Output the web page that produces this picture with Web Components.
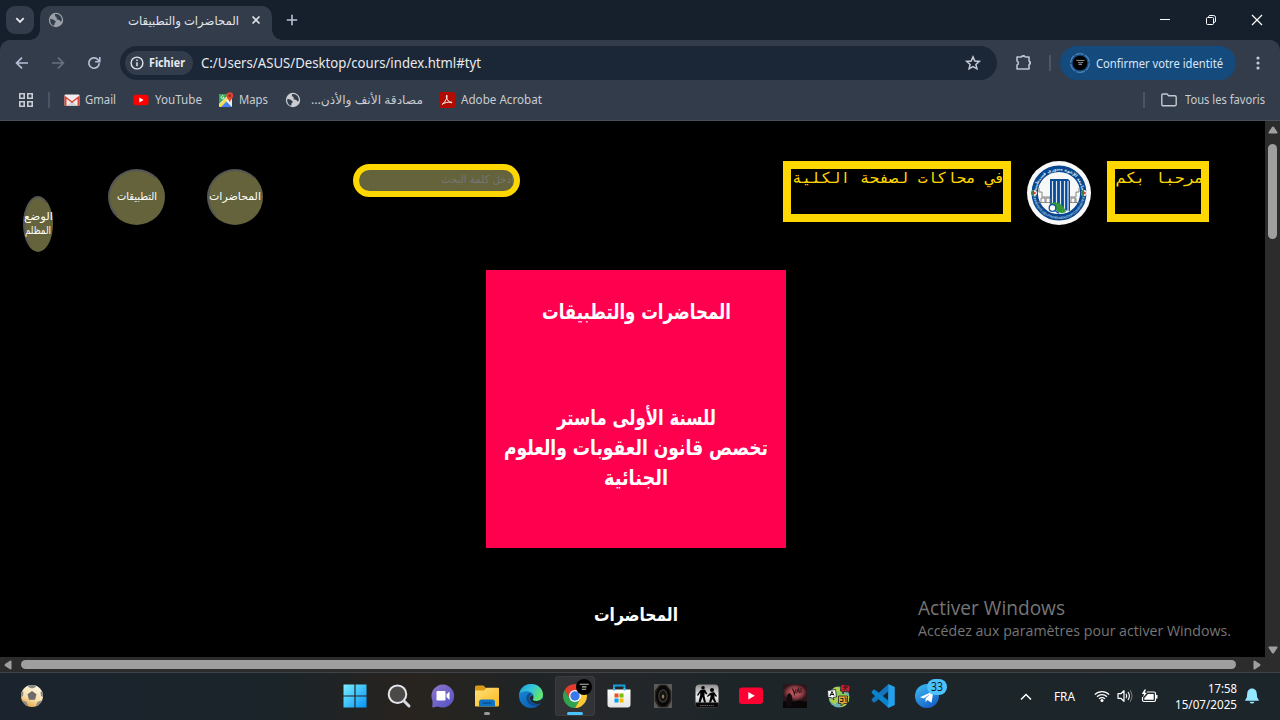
<!DOCTYPE html>
<html lang="fr">
<head>
<meta charset="utf-8">
<title>المحاضرات والتطبيقات</title>
<style>
html,body{margin:0;height:100%;overflow:hidden;background:#000}
body{font-family:"Noto Sans","Open Sans","DejaVu Sans",sans-serif}
</style>
</head>
<body>
<desk-screen></desk-screen>
<script>
const define = (name, html, after) => customElements.define(name, class extends HTMLElement {
  connectedCallback() {
    if (this.shadowRoot) return;
    const t = document.createElement('template');
    t.innerHTML = typeof html === 'function' ? html(this) : html;
    this.attachShadow({mode: 'open'}).append(t.content.cloneNode(true));
    if (after) after(this);
  }
});

/* One line of text set to a given width: <fit-text w="120">…</fit-text> */
define('fit-text', el => `<style>
:host{display:flex;flex:none;white-space:nowrap;line-height:1.36;width:${el.getAttribute('w')}px;direction:ltr}
span{display:block;flex:none;width:max-content;transform-origin:0 50%;direction:${el.hasAttribute('rtl') ? 'rtl' : 'ltr'};unicode-bidi:isolate}
</style><span><slot></slot></span>`, el => {
  const s = el.shadowRoot.querySelector('span');
  const n = s.getBoundingClientRect().width;
  if (n) s.style.transform = `scaleX(${el.getAttribute('w') / n})`;
});

const globe = c => `<circle cx="8" cy="8" r="7.2" fill="${c}"/><path d="M2.2 7.2C4.5 6.8 5.5 8 6.5 8.600C8 9.400 8.200 10 7 10.800C6.300 11.500 6.500 13 6 13.700C3.500 13 1.800 10.600 2.200 7.200Z" fill="#323c4b"/><path d="M6.800 2C7.500 2.600 6.500 3.800 7.500 4.600C8.800 5.300 9.200 6.300 8.500 7.200C9.800 8.200 11.300 7.200 12 8.800C12.400 10 13 9.500 13.700 8.800C14.300 5 11.500 1.800 8 1.900Z" fill="#323c4b"/>`;
const icons = {
  chevron: [10,10,`<path d="M1.300 3.200L5 6.900L8.700 3.200" fill="none" stroke="#e3e6ec" stroke-width="1.900"/>`],
  globeTab: [16,16,globe('#9ba0a8')],
  globe: [16,16,globe('#c9ccd1')],
  close: [10,10,`<path d="M1.500 1.500L8.500 8.500M8.500 1.500L1.500 8.500" stroke="#dfe2e8" stroke-width="1.700"/>`],
  plus: [12,12,`<path d="M6 .8V11.200M.8 6H11.200" stroke="#b9c2d4" stroke-width="1.600"/>`],
  back: [14,14,`<path d="M13 7H2M7 1.600L1.600 7L7 12.400" fill="none" stroke="#b5c0d5" stroke-width="1.700"/>`],
  forward: [14,14,`<path d="M1 7H12M7 1.600L12.400 7L7 12.400" fill="none" stroke="#68707f" stroke-width="1.700"/>`],
  reload: [14,14,`<path d="M12.200 7.200A5.200 5.200 0 1 1 10.900 3.600L12.200 5" fill="none" stroke="#b5c0d5" stroke-width="1.700"/><path d="M12.800 1V5.700H8.100" fill="none" stroke="#b5c0d5" stroke-width="1.600"/>`],
  info: [14,14,`<circle cx="7" cy="7" r="5.900" fill="none" stroke="#dfe3ea" stroke-width="1.400"/><path d="M7 6.200V10.300M7 3.600V5" stroke="#dfe3ea" stroke-width="1.500"/>`],
  star: [16,16,`<path d="M8 1.900L9.800 6L14.300 6.400L10.900 9.400L11.900 13.800L8 11.500L4.100 13.800L5.100 9.400L1.700 6.400L6.200 6Z" fill="none" stroke="#c6cbd5" stroke-width="1.500"/>`],
  puzzle: [18,18,`<path d="M2 4H6.500A2 2 0 0 1 10.200 4H14V8A2 2 0 0 1 14 11.600V16H2V12A2.200 2.200 0 0 0 2 7.900Z" fill="none" stroke="#b9c3d6" stroke-width="1.600" stroke-linejoin="round"/><path d="M6.200 4A2.100 2.100 0 0 1 10.400 4ZM14 7.800A2.100 2.100 0 0 1 14 12Z" fill="#b9c3d6"/>`],
  avatar: [20,20,`<circle cx="10" cy="10" r="9.300" fill="none" stroke="#4c83bd" stroke-width="1.300" stroke-dasharray="8.500 1.240"/><circle cx="10" cy="10" r="7.300" fill="#000"/><path d="M6.300 7.400H14.500M8 9.300L10 10L13 9.300M8.500 11.400H12" fill="none" stroke="#aaa" stroke-width=".9"/>`],
  dots: [4,16,`<g fill="#c3cad6"><circle cx="2" cy="3" r="1.600"/><circle cx="2" cy="8" r="1.600"/><circle cx="2" cy="13" r="1.600"/></g>`],
  min: [10,10,`<path d="M0 4.500H10" stroke="#fff"/>`],
  restore: [10,10,`<path d="M.5 3.500Q.5 2.500 1.500 2.500H6.500Q7.500 2.500 7.500 3.500V8.500Q7.500 9.500 6.500 9.500H1.500Q.5 9.500 .5 8.500ZM2.600 2V1.500Q2.900 .5 4 .5H7.500Q9.500 .5 9.500 2.500V6Q9.500 7.200 8 7.500" fill="none" stroke="#fff"/>`],
  winclose: [12,12,`<path d="M1 1L11 11M11 1L1 11" stroke="#fff" stroke-width="1.200"/>`],
  apps: [14,14,`<g fill="none" stroke="#c8ccd3" stroke-width="1.600"><path d="M.8.800H5.200V5.200H.8ZM8.800.800H13.200V5.200H8.800ZM.8 8.800H5.200V13.200H.8ZM8.800 8.800H13.200V13.200H8.800Z"/></g>`],
  gmail: [16,12,`<rect x=".5" y=".5" width="15" height="11.300" rx="1" fill="#efefef"/><path d="M3 11.500L8 7L13 11.500Z" fill="#d2d2d2"/><path d="M.5 11.800V1.400L8 7.200L15.500 1.400V11.800H13.500V4.800L8 9L2.500 4.800V11.800Z" fill="#dc4538"/>`],
  ytsmall: [16,12,`<rect x=".5" y=".7" width="15" height="10.600" rx="2.400" fill="#f00"/><path d="M6.300 3.600L10.600 6L6.300 8.400Z" fill="#fff"/>`],
  maps: [16,16,`<clipPath id="m"><rect x="1" y="2" width="13" height="13" rx="1.500"/></clipPath><g clip-path="url(#m)"><path d="M1 2H14V15H1Z" fill="#e8eaed"/><path d="M1 2H11L1 12Z" fill="#34a853"/><path d="M2.500 15L8 9L14 15Z" fill="#3f83f7"/><path d="M1 13L11 3L13 5L3 15H1Z" fill="#fbdc4d"/><path d="M8 8.500L9.500 7L14 12V15Z" fill="#eee"/></g><path d="M5.600 4.200A1.500 1.500 0 1 0 6 5.500H4.700" fill="none" stroke="#fff" stroke-width=".8"/><path d="M11.800.300A3.400 3.400 0 0 1 15.200 3.700C15.200 6.500 12.500 7.500 11.800 10.500C11.100 7.500 8.400 6.500 8.400 3.700A3.400 3.400 0 0 1 11.800.300Z" fill="#e04434"/><circle cx="11.800" cy="3.700" r="1.200" fill="#8e251d"/>`],
  adobe: [16,16,`<rect width="16" height="16" rx="2.500" fill="#b30b00"/><path d="M7.600 3.200C9 3 7.700 8 3.700 12.200C2.200 13.300 3 10.500 12 10C14.300 10.200 12.300 12 9.600 9.200C8 7.600 6.700 4 7.600 3.200Z" fill="none" stroke="#fff" stroke-width="1"/>`],
  folder: [16,14,`<path d="M.8 2.300Q.8 1 2.200 1H6L7.700 2.800H13.800Q15.200 2.800 15.200 4.200V11.500Q15.200 12.800 13.800 12.800H2.200Q.8 12.800 .8 11.500Z" fill="none" stroke="#c5c8cf" stroke-width="1.400"/>`],
  up: [10,8,`<path d="M1 7.500H9Q9.800 7 9.300 6L6 1Q5 0 4 1L.7 6Q.2 7 1 7.500Z" fill="#9f9f9f"/>`],
  down: [10,8,`<path d="M1 .5H9Q9.800 1 9.300 2L6 7Q5 8 4 7L.7 2Q.2 1 1 .5Z" fill="#9f9f9f"/>`],
  left: [8,10,`<path d="M7.500 1V9Q7 9.800 6 9.300L1 6Q0 5 1 4L6 .7Q7 .2 7.500 1Z" fill="#9f9f9f"/>`],
  right: [8,10,`<path d="M.5 1V9Q1 9.800 2 9.300L7 6Q8 5 7 4L2 .7Q1 .2 .5 1Z" fill="#9f9f9f"/>`],
  seal: [64,64,`<defs><path id="t" d="M9.300 32A22.700 22.700 0 0 1 54.700 32"/><path id="b" d="M6 32A26 26 0 0 0 58 32"/></defs><circle cx="32" cy="32" r="32" fill="#f8f8f8"/><circle cx="32" cy="32" r="24.300" fill="none" stroke="#08478f" stroke-width="6.400"/><text font-size="4.400" font-weight="bold" font-family="DejaVu Sans" fill="#dce7f6" text-anchor="middle"><textPath href="#t" startOffset="50%">جامعة الإخوة منتوري قسنطينة</textPath></text><text font-size="3.200" font-family="Liberation Sans" fill="#dce7f6" text-anchor="middle"><textPath href="#b" startOffset="50%" textLength="74">UNIVERSITE DES FRERES MENTOURI CONSTANTINE</textPath></text><path d="M23 18H41L43 20V50L23 47Z" fill="#0a4b96"/><path d="M25.500 20V42M29.500 20V43M33.500 20V46M37.500 20V50M41 20V50" stroke="#dde8f4" stroke-width="1.200"/><path d="M12 27V31H15V36H23M52 27V31H49V36H43M14 42V37H18V42M19 42V37H23V42M44 42V37H48V42M49 42V37" fill="none" stroke="#787878" stroke-width=".9"/><path d="M11 41.500H23M43 41.500H53" stroke="#777" stroke-width=".8"/><path d="M22 43Q34 38 39 51Q31 54 28 47Z" fill="#34983a"/><circle cx="25.500" cy="47" r="3.300" fill="#fff" stroke="#1255a5" stroke-width="1.300"/><path d="M28 49.500L32 52.500" stroke="#1255a5" stroke-width="1.500"/><circle cx="7" cy="32" r="3" fill="#f2eeee"/><path d="M7 29A3 3 0 0 0 7 35Z" fill="#36843f"/><circle cx="7.500" cy="32" r="1.300" fill="#dc3a36"/><circle cx="57" cy="32" r="3" fill="#f2eeee"/><path d="M57 29A3 3 0 0 0 57 35Z" fill="#36843f"/><circle cx="57.500" cy="32" r="1.300" fill="#dc3a36"/>`],
  ball: [22,22,`<defs><linearGradient id="g" x1=".7" y1="0" x2=".3" y2="1"><stop offset="0" stop-color="#fff8e2"/><stop offset=".6" stop-color="#f8dfa9"/><stop offset="1" stop-color="#e3a641"/></linearGradient><clipPath id="c"><circle cx="11" cy="11" r="11"/></clipPath></defs><g clip-path="url(#c)"><path d="M0 0H22V22H0Z" fill="url(#g)"/><path d="M11 6L15.500 9.200L14 14.800H8L6.500 9.200Z" fill="#6d6b6b"/><path d="M6 0H16L14 2.500L11 3.600L8 2.500ZM0 6L2.500 7L2 11L0 12ZM22 6L19.500 7L20 11L22 12ZM2 15.500L5.500 17L7 20L5 22H0ZM20 15.500L16.500 17L15 20L17 22H22Z" fill="#8b8985"/></g>`],
  windows: [24,24,`<defs><linearGradient id="g" gradientUnits="userSpaceOnUse" x1="1" y1="1" x2="23" y2="23"><stop stop-color="#77edff"/><stop offset="1" stop-color="#0895f8"/></linearGradient></defs><path d="M.500.500H11.400V11.400H.500ZM12.600.500H23.500V11.400H12.600ZM.500 12.600H11.400V23.500H.500ZM12.600 12.600H23.500V23.500H12.600Z" fill="url(#g)"/>`],
  search: [24,24,`<circle cx="10.500" cy="10.300" r="8.800" fill="#4b4a49" stroke="#e3e7eb" stroke-width="2"/><path d="M17 17L22 22" stroke="#d5dbe0" stroke-width="3" stroke-linecap="round"/>`],
  meet: [24,24,`<defs><linearGradient id="g" x1="0" y1="0" x2="1" y2="1"><stop stop-color="#8e75c8"/><stop offset="1" stop-color="#5254c6"/></linearGradient></defs><path d="M12 .500A11.500 11.500 0 1 1 7 22.500L1.500 23.500Q1 23 1.500 20.500V17A11.500 11.500 0 0 1 12 .500Z" fill="url(#g)"/><rect x="5.500" y="7" width="9" height="9.500" rx="1" fill="#fff"/><path d="M15.500 10.500L18.500 7.500V16L15.500 13Z" fill="#fff"/>`],
  explorer: [24,24,`<defs><linearGradient id="g" x1="0" y1="0" x2="1" y2="1"><stop stop-color="#ffe07b"/><stop offset="1" stop-color="#f8b91b"/></linearGradient></defs><path d="M0 3Q0 1.500 1.500 1.500H8.500L11 4V7H0Z" fill="#d99a17"/><path d="M0 6.500H9L11.500 3.800H23Q24 3.800 24 5V21.500Q24 22.500 23 22.500H1Q0 22.500 0 21.500Z" fill="url(#g)"/><path d="M4 22.500V18Q4 15.500 6.500 15.500H17.500Q20 15.500 20 18V22.500Z" fill="#0f73c5"/><rect x="7.500" y="18.300" width="9" height="1.700" rx=".8" fill="#0a559b"/>`],
  edge: [24,24,`<defs><linearGradient id="g" x1="0" y1="0" x2="1" y2=".5"><stop stop-color="#209bd4"/><stop offset=".5" stop-color="#31c4dd"/><stop offset="1" stop-color="#63e66b"/></linearGradient><linearGradient id="h" x1="0" y1="0" x2=".5" y2="1"><stop stop-color="#1a8fd8"/><stop offset="1" stop-color="#0b62b8"/></linearGradient></defs><circle cx="12" cy="12" r="12" fill="url(#h)"/><path d="M.3 10C1.300 4 6 0 12 0C19 0 24 5 24 10.500C24 15 21 17 17.500 17C15 17 13.500 16 14 15C15.700 13 14.500 8.200 9.500 7.400C5.500 6.900 2 8.100.300 10Z" fill="url(#g)"/><path d="M9.500 9.500C5 13 8 22 16 22C18.500 22 20.700 20.800 21.800 19.500C17 21.500 9.500 19.500 10.300 13.500Q10.700 10.500 12.500 10Q11 9 9.500 9.500Z" fill="#114a8b"/><path d="M13.500 11Q15 14 13.500 15.500Q14 17 17.500 17C20 17 22 16 23 14.500L24 16L21.500 19.500C16 21 10 18 11 13Z" fill="#202829"/>`],
  chrome: [24,24,`<path d="M12 6H22.390A12 12 0 0 0 1.610 6L6.800 15Z" fill="#e33b2e"/><path d="M6.800 15L1.610 6A12 12 0 0 0 12 24L17.200 15Z" fill="#31a350"/><path d="M17.200 15L12 24A12 12 0 0 0 22.390 6H12Z" fill="#fcc934"/><circle cx="12" cy="12" r="6" fill="#fff"/><circle cx="12" cy="12" r="4.700" fill="#3979ee"/>`],
  disc: [16,16,`<circle cx="8" cy="8" r="8" fill="#000"/><path d="M3.700 5.300H12.800M6 7.900H10.500M5.800 10.200H10.300" stroke="#bbb" stroke-width="1.100"/>`],
  store: [24,24,`<defs><linearGradient id="g" x2="0" y2="1"><stop stop-color="#fff"/><stop offset="1" stop-color="#e4e4e4"/></linearGradient></defs><path d="M7 7V1.500H17.500V7" fill="none" stroke="#159edc" stroke-width="2"/><path d="M.500 5.500H23.500V20.500Q23.500 23.500 20.500 23.500H3.500Q.500 23.500.500 20.500Z" fill="url(#g)"/><path d="M7 4V6.500M17.500 4V6.500" stroke="#36b7ee" stroke-width="2"/><path d="M7.500 9.500H11.500V13.500H7.500Z" fill="#ef4e25"/><path d="M12.500 9.500H16.500V13.500H12.500Z" fill="#7bb902"/><path d="M7.500 14.500H11.500V18.500H7.500Z" fill="#00a2ec"/><path d="M12.500 14.500H16.500V18.500H12.500Z" fill="#fdb703"/>`],
  amulet: [18,24,`<rect width="18" height="24" fill="#4a4846"/><path d="M1 1H17V23H1Z" fill="#24211f"/><path d="M0 0H6L0 8ZM18 0H12L18 8ZM0 24V16L5 24ZM18 24V16L13 24Z" fill="#5b5855"/><ellipse cx="9" cy="12" rx="7" ry="10.500" fill="#070707"/><ellipse cx="9" cy="12" rx="4.200" ry="6" fill="#161412" stroke="#3a3630" stroke-width="1.400"/><ellipse cx="9" cy="12.500" rx="1.200" ry="2" fill="#8f7c5a"/>`],
  figures: [24,24,`<defs><linearGradient id="g" x2="0" y2="1"><stop stop-color="#8b8b8b"/><stop offset=".5" stop-color="#eee"/><stop offset="1" stop-color="#aaa"/></linearGradient></defs><rect x=".5" y=".5" width="23" height="23" rx="4" fill="url(#g)"/><path d="M.500 18.500H23.500V20Q23.500 23.500 20 23.500H4Q.500 23.500.500 20Z" fill="#090909"/><circle cx="8" cy="3.800" r="1.800"/><circle cx="17" cy="6" r="2"/><path d="M5.500 6L10 5.500L12.500 10L11 10.500L9.500 8.500V12L11 18.500H9L7.500 13L5.500 18.500H3.500L5.200 11V8.500L3 12L2 11ZM15 9L19 8L22 12L21 13L19.500 11V14L21.500 18.500H19.500L17.500 15L16 18.500H14L15.500 13V11L12.500 13L12 12Z"/><path d="M5 21.500H19" stroke="#777" stroke-width=".8" stroke-dasharray="1.500 .7"/>`],
  youtube: [24,18,`<rect y=".5" width="24" height="16.500" rx="3" fill="#ff0033"/><path d="M9.300 5L15.800 8.700L9.300 12.500Z" fill="#fff"/>`],
  game: [24,24,`<defs><radialGradient id="g"><stop stop-color="#d4656b"/><stop offset=".65" stop-color="#8c3c43"/><stop offset="1" stop-color="#2b171b"/></radialGradient></defs><path d="M0 0H24V24H0Z" fill="#1a0f12"/><path d="M0 0H24V17H0Z" fill="url(#g)"/><path d="M0 18L6 17L11 18L16 16.500L24 18V24H0Z" fill="#080607"/><path d="M3.500 21V14L4.500 10.500L6.500 9L8.500 11L9.500 15L8 19L9 22H2Z" fill="#120b0e"/><path d="M9.500 4.500L11.500 10L13 5M13.500 9.500L15.500 4.500L16.500 9M18 4V9" fill="none" stroke="#35181b" stroke-width="1.200"/>`],
  lang: [24,24,`<circle cx="12" cy="13" r="10.500" fill="#69aeb9"/><path d="M6 5Q9 1 13 4L15 8L10 12L12 15L8 21L3 17L4 12ZM17 9L22 12V17L18 22L13 23L14 19Z" fill="#a9ce48"/><path d="M9 7L17 9L15 16L8 12Z" fill="#93ca54"/><path d="M.500 6.500L8.500 5.500L9.500 13L6 13.500L7 16L4 13.500L1 13.500Z" fill="#f6f6f6" stroke="#1b2325" stroke-width=".8"/><path d="M3 12L5 7.500L7 11.500M3.700 10.500H6.300" fill="none" stroke="#111" stroke-width="1"/><path d="M14 .500L23 1.500L22.500 8L17 7.500L16 10L15.500 7.500L13.500 7Z" fill="#c82332" stroke="#1b2325" stroke-width=".8"/><path d="M16 3H21M18.500 1.500V3M17 3L20 6.500M20.500 3L16 6.500" stroke="#2f0c10" stroke-width=".8"/><path d="M11.500 12H20.500V19.500H17L14 22V19.500H11.500Z" fill="#e6a33a" stroke="#1b2325" stroke-width=".8"/><path d="M13.500 14.500H16V17.500H13M17.500 14H19V18" fill="none" stroke="#29200f" stroke-width="1"/>`],
  vscode: [24,24,`<path d="M17.300.300L23.500 3V21L17.300 23.700Z" fill="#28a4f0"/><path d="M17.300.300L1 14.700Q0 16 1.200 17L2.500 18.200Q3.300 18.800 4.300 18L18.500 6.500Z" fill="#1675ba"/><path d="M17.300 23.700L1 9.300Q0 8 1.200 7L2.500 5.800Q3.300 5.200 4.300 6L18.500 17.500Z" fill="#0a83cd"/><path d="M17.300.300L23.500 3V21L17.300 23.700L16.500 22.500L17.500 18V6Z" fill="#25a0ea"/>`],
  telegram: [24,24,`<defs><linearGradient id="g" x2=".6" y2="1"><stop stop-color="#3fc0f4"/><stop offset="1" stop-color="#1763c8"/></linearGradient></defs><circle cx="12" cy="12" r="12" fill="url(#g)"/><path d="M5 13.200L18.500 7L16.500 18.800L12.500 16L10.500 18V14.500L15 10L8.800 14.600Z" fill="#fff"/>`],
  tray: [12,8,`<path d="M1 6.500L6 1.500L11 6.500" fill="none" stroke="#fff" stroke-width="1.500"/>`],
  wifi: [16,14,`<g fill="none" stroke="#fff" stroke-width="1.200"><path d="M.8 5.600A10.200 10.200 0 0 1 15.200 5.600M3 7.700A7.100 7.100 0 0 1 13 7.700M5 9.800A4.200 4.200 0 0 1 11 9.800"/></g><circle cx="8" cy="11.500" r="1.500" fill="#fff"/>`],
  sound: [16,14,`<path d="M1 4.700H3.800L7 1.700V12.300L3.800 9.300H1Z" fill="none" stroke="#fff" stroke-width="1.200" stroke-linejoin="round"/><path d="M9 4.800Q10.500 7 9 9.200M11 3Q13.800 7 11 11" fill="none" stroke="#fff" stroke-width="1.100"/><path d="M13 1.300Q17 7 13 12.700" fill="none" stroke="#6f767a" stroke-width="1.100"/>`],
  battery: [17,14,`<path d="M6 3H13Q14.500 3 14.500 4.500V11Q14.500 12.500 13 12.500H3Q1.500 12.500 1.500 11V8" fill="none" stroke="#fff" stroke-width="1.200"/><path d="M7 5H12.700V10.700H3.300V9Z" fill="#fff"/><path d="M15 6H16.500V9.500H15Z" fill="#fff"/><path d="M3.500.500L.8 5H3L2 8.500L6 3.700H3.800L5 .500Z" fill="#fff"/>`],
  bell: [14,16,`<path d="M7 .5C10 .5 11.700 2.800 11.800 5.800L12.200 9.500L13.700 11.800V12.700H.3V11.800L1.800 9.500L2.200 5.800C2.300 2.800 4 .5 7 .5Z" fill="#93e8ff"/><path d="M4.600 13.700H9.400Q9 15.600 7 15.600Q5 15.600 4.600 13.700Z" fill="#93e8ff"/>`]
};
define('ui-icon', el => {
  const [w, h, body] = icons[el.getAttribute('name')];
  return `<style>:host{display:block;flex:none;width:${w}px;height:${h}px}svg{display:block;overflow:visible}</style><svg width="${w}" height="${h}" viewBox="0 0 ${w} ${h}">${body}</svg>`;
});

define('tab-strip', `<style>
:host{display:flex;height:40px;background:#15202c;color:#e3e6eb;font-size:12px}
.list{width:28px;height:28px;margin:6px 6px 0;border-radius:9px;background:#323c4b;display:grid;place-items:center}
.tab{position:relative;width:232px;height:34px;box-sizing:border-box;margin-top:6px;border-radius:10px 10px 0 0;background:#323c4b;display:flex;align-items:center;padding:0 11px 6px 8px}
.tab::before,.tab::after{content:"";position:absolute;bottom:0;width:10px;height:10px}
.tab::before{left:-10px;background:radial-gradient(circle at 0 0,transparent 9.500px,#323c4b 10px)}
.tab::after{right:-10px;background:radial-gradient(circle at 100% 0,transparent 9.500px,#323c4b 10px)}
.tab fit-text{margin:0 12px 0 auto;padding-top:2px}
.new{margin:14px 0 0 14px}
.win{margin-left:auto;display:flex;gap:35px;padding:0 17px 0 0;align-items:center}
</style><div class="list"><ui-icon name="chevron"></ui-icon></div>
<div class="tab"><ui-icon name="globeTab"></ui-icon><fit-text w="111" rtl>المحاضرات والتطبيقات</fit-text><ui-icon name="close"></ui-icon></div>
<ui-icon class="new" name="plus"></ui-icon>
<div class="win"><ui-icon name="min" style="margin-right:1px"></ui-icon><ui-icon name="restore"></ui-icon><ui-icon name="winclose"></ui-icon></div>`);

define('tool-bar', `<style>
:host{display:block;background:#15202c;height:46px;color:#e8eaee}
.bar{height:46px;box-sizing:border-box;background:#323c4b;border-radius:10px 10px 0 0;display:flex;align-items:center;padding:0 20px 0 15px}
.nav{display:flex;gap:22px;width:105px;flex:none}
.omni{width:877px;height:34px;box-sizing:border-box;border-radius:17px;background:#1b2636;display:flex;align-items:center;padding:0 16px 0 5px}
.chip{width:68px;height:24px;box-sizing:border-box;border-radius:12px;background:#323c4b;display:flex;align-items:center;gap:5px;padding-left:5px;margin-right:8px;font-size:12px;font-weight:700}
.url{font-size:14px}.omni ui-icon[name=star]{margin-left:auto}
.puz{margin:0 16px 2px 18px}
.sep{width:2px;height:16px;background:#4b5666;margin-right:9px}
.id{width:176px;height:34px;box-sizing:border-box;border-radius:17px;background:#144a7c;color:#d8e7fb;display:flex;align-items:center;gap:6px;padding-left:10px;font-size:12.500px}
.m{margin-left:20px}
</style><div class="bar"><div class="nav"><ui-icon name="back"></ui-icon><ui-icon name="forward"></ui-icon><ui-icon name="reload"></ui-icon></div>
<div class="omni"><div class="chip"><ui-icon name="info"></ui-icon><fit-text w="36">Fichier</fit-text></div><fit-text class="url" w="280">C:/Users/ASUS/Desktop/cours/index.html#tyt</fit-text><ui-icon name="star"></ui-icon></div>
<ui-icon class="puz" name="puzzle"></ui-icon><div class="sep"></div><div class="id"><ui-icon name="avatar"></ui-icon><fit-text w="127">Confirmer votre identité</fit-text></div><ui-icon class="m" name="dots"></ui-icon></div>`);

define('bookmark-item', el => `<style>:host{display:flex;align-items:center;gap:5px}::slotted(*){padding-top:2px}</style><ui-icon name="${el.getAttribute('icon')}"></ui-icon><slot></slot>`);

define('bookmark-bar', `<style>
:host{display:flex;align-items:center;height:35px;box-sizing:border-box;padding:0 14px 7px 19px;background:#323c4b;border-bottom:1px solid #4a505a;color:#c9ccd2;font-size:12px}
i{width:2px;height:16px;background:#4a5463;margin-left:15px}
</style><ui-icon name="apps"></ui-icon><i></i>
<bookmark-item icon="gmail" style="margin-left:14px"><fit-text w="31">Gmail</fit-text></bookmark-item>
<bookmark-item icon="ytsmall" style="margin-left:17px;gap:6px"><fit-text w="47">YouTube</fit-text></bookmark-item>
<bookmark-item icon="maps" style="margin-left:16px"><fit-text w="29">Maps</fit-text></bookmark-item>
<bookmark-item icon="globe" style="margin-left:17px;gap:10px"><fit-text w="112" rtl>مصادقة الأنف والأذن...</fit-text></bookmark-item>
<bookmark-item icon="adobe" style="margin-left:16px;gap:6px"><fit-text w="81">Adobe Acrobat</fit-text></bookmark-item>
<i style="margin-left:auto;margin-right:16px"></i><bookmark-item icon="folder" style="gap:8px;margin-right:1px"><fit-text w="80">Tous les favoris</fit-text></bookmark-item>`);

define('oval-button', `<style>
:host{display:flex;flex-direction:column;justify-content:center;align-items:center;box-sizing:border-box;height:56px;flex:none;border:2px solid;border-color:#555 transparent transparent #555;border-radius:50%;background:#64633b;background-clip:border-box;color:#fff;font:11px/14px "DejaVu Sans",sans-serif}
</style><slot></slot>`);
define('gold-box', `<style>
:host{display:block;box-sizing:border-box;height:61px;flex:none;border:8px solid #ffd700;color:#ffd700;overflow:hidden;font:15px/18px "DejaVu Sans Mono",monospace}
::slotted(*){margin-left:1px}
</style><slot></slot>`);
define('site-header', `<style>
:host{display:flex;align-items:flex-start;padding:40px 0 0 23px;height:109px;box-sizing:border-box}
.search{width:167px;height:33px;box-sizing:border-box;border:6px solid #ffd700;border-radius:17px;background:#64633b;margin:3px 0 0 90px;padding-bottom:2px;overflow:hidden;display:flex;justify-content:flex-end;align-items:center;color:#757575;font:11px "DejaVu Sans",sans-serif}
fit-text{line-height:inherit}
</style>
<oval-button style="width:30px;margin-top:35px"><fit-text w="29" rtl>الوضع</fit-text><fit-text w="26" rtl>المظلم</fit-text></oval-button>
<oval-button style="width:57px;margin:8px 0 0 55px"><fit-text w="40" rtl>التطبيقات</fit-text></oval-button>
<oval-button style="width:56px;margin:8px 0 0 42px"><fit-text w="52" rtl>المحاضرات</fit-text></oval-button>
<div class="search"><fit-text w="73" rtl>أدخل كلمة البحث</fit-text></div>
<gold-box style="width:228px;margin-left:263px"><fit-text w="213" rtl>في محاكات لصفحة الكلية</fit-text></gold-box>
<ui-icon name="seal" style="margin:0 16px"></ui-icon>
<gold-box style="width:102px"><fit-text w="88" rtl>مرحبا بكم</fit-text></gold-box>`);

define('course-card', `<style>
:host{display:flex;flex-direction:column;align-items:center;box-sizing:border-box;width:300px;height:278px;padding-top:27px;background:#ff004f;color:#fff;font:700 21px/30px "DejaVu Sans",sans-serif}
</style><slot></slot>`);

define('site-page', `<style>
:host{display:flex;flex-direction:column;position:relative;background:#000;overflow:hidden}
course-card{margin:40px 0 0 486px}
fit-text{line-height:inherit}
h2{margin:53px 0 0 594px;color:#fff;font:700 18px/28px "DejaVu Sans",sans-serif}
.mark{position:absolute;left:918px;top:473px;color:#767676;font-family:"Open Sans","Noto Sans",sans-serif}
.mark .a{font-size:19.500px;line-height:28px}.mark .b{font-size:14.500px;line-height:18px}
</style><site-header></site-header>
<course-card><fit-text w="189" rtl>المحاضرات والتطبيقات</fit-text><fit-text w="159" rtl style="margin-top:76px">للسنة الأولى ماستر</fit-text><fit-text w="264" rtl>تخصص قانون العقوبات والعلوم</fit-text><fit-text w="64" rtl>الجنائية</fit-text></course-card>
<h2><fit-text w="84" rtl>المحاضرات</fit-text></h2>
<div class="mark"><fit-text class="a" w="147">Activer Windows</fit-text><fit-text class="b" w="313">Accédez aux paramètres pour activer Windows.</fit-text></div>`);

define('v-scroll', `<style>:host{display:flex;flex-direction:column;align-items:center;justify-content:space-between;background:#2c2c2c;padding:5px 0 3px}
div{width:9px;height:95px;border-radius:5px;background:#9f9f9f;margin:10px 0 auto}</style><ui-icon name="up"></ui-icon><div></div><ui-icon name="down"></ui-icon>`);
define('h-scroll', `<style>:host{display:flex;align-items:center;background:#2c2c2c;grid-column:1/3;padding:0 19px 0 4px}
div{width:1215px;height:9px;border-radius:5px;background:#9f9f9f;margin:0 auto 0 9px}</style><ui-icon name="left"></ui-icon><div></div><ui-icon name="right"></ui-icon>`);

define('task-item', el => `<style>
:host{display:grid;place-items:center;position:relative;width:44px;height:47px;flex:none}
.hl{width:40px;height:40px;box-sizing:border-box;border-radius:4px;display:grid;place-items:center;margin-bottom:1px}
:host([active]) .hl{background:#313336;box-shadow:inset 0 0 0 1px #3a3c3f}
:host([open])::after,:host([active])::after{content:"";position:absolute;bottom:5px;left:19px;width:6px;height:3px;border-radius:2px;background:#9a9a9a}
:host([active])::after{left:14px;width:16px;background:#4cc2ff}
::slotted(*){position:absolute}
</style><div class="hl"><ui-icon name="${el.getAttribute('icon')}"></ui-icon></div><slot></slot>`);

define('task-bar', `<style>
:host{display:flex;align-items:center;height:48px;box-sizing:border-box;border-top:1px solid #404448;background:linear-gradient(90deg,#1b242e 0,#1b2429 22%,#28231f 32%,#27241f 34%,#1f2426 42%,#25272a 46%,#1d2529 58%,#1c2529 100%);color:#fff;font-size:12px}
.items{display:flex;margin-left:290px}
.badge{left:22px;top:6px;width:20px;height:16px;border-radius:9px;background:#4cc2ff;color:#101820;font-size:12px;display:grid;place-items:center}
.clock{display:flex;flex-direction:column;align-items:flex-end;width:62px;margin-left:17px}
.clock fit-text{line-height:16px}
.tray{display:flex;align-items:center;padding-bottom:1px}
</style><ui-icon name="ball" style="margin:0 0 1px 21px"></ui-icon>
<div class="items"><task-item icon="windows"></task-item><task-item icon="search"></task-item><task-item icon="meet"></task-item><task-item icon="explorer" open></task-item><task-item icon="edge"></task-item><task-item icon="chrome" active><ui-icon name="disc" style="left:23px;top:6px"></ui-icon></task-item><task-item icon="store"></task-item><task-item icon="amulet"></task-item><task-item icon="figures"></task-item><task-item icon="youtube"></task-item><task-item icon="game"></task-item><task-item icon="lang"></task-item><task-item icon="vscode"></task-item><task-item icon="telegram"><div class="badge"><fit-text w="12">33</fit-text></div></task-item></div>
<ui-icon name="tray" style="margin-left:71px"></ui-icon><fit-text w="21" style="margin-left:22px;padding-top:2px">FRA</fit-text>
<div class="tray"><ui-icon name="wifi" style="margin-left:19px"></ui-icon><ui-icon name="sound" style="margin-left:7px"></ui-icon><ui-icon name="battery" style="margin-left:8px"></ui-icon></div>
<div class="clock"><fit-text w="29">17:58</fit-text><fit-text w="62">15/07/2025</fit-text></div><ui-icon name="bell" style="margin:0 0 1px 8px"></ui-icon>`);

define('desk-screen', `<style>
:host{display:grid;grid-template-rows:121px 551px 48px;width:1280px;height:720px;overflow:hidden}
main{display:grid;grid-template:536px 15px / 1265px 15px}
</style><header><tab-strip></tab-strip><tool-bar></tool-bar><bookmark-bar></bookmark-bar></header>
<main><site-page></site-page><v-scroll></v-scroll><h-scroll></h-scroll></main>
<task-bar></task-bar>`);
</script>
</body>
</html>
